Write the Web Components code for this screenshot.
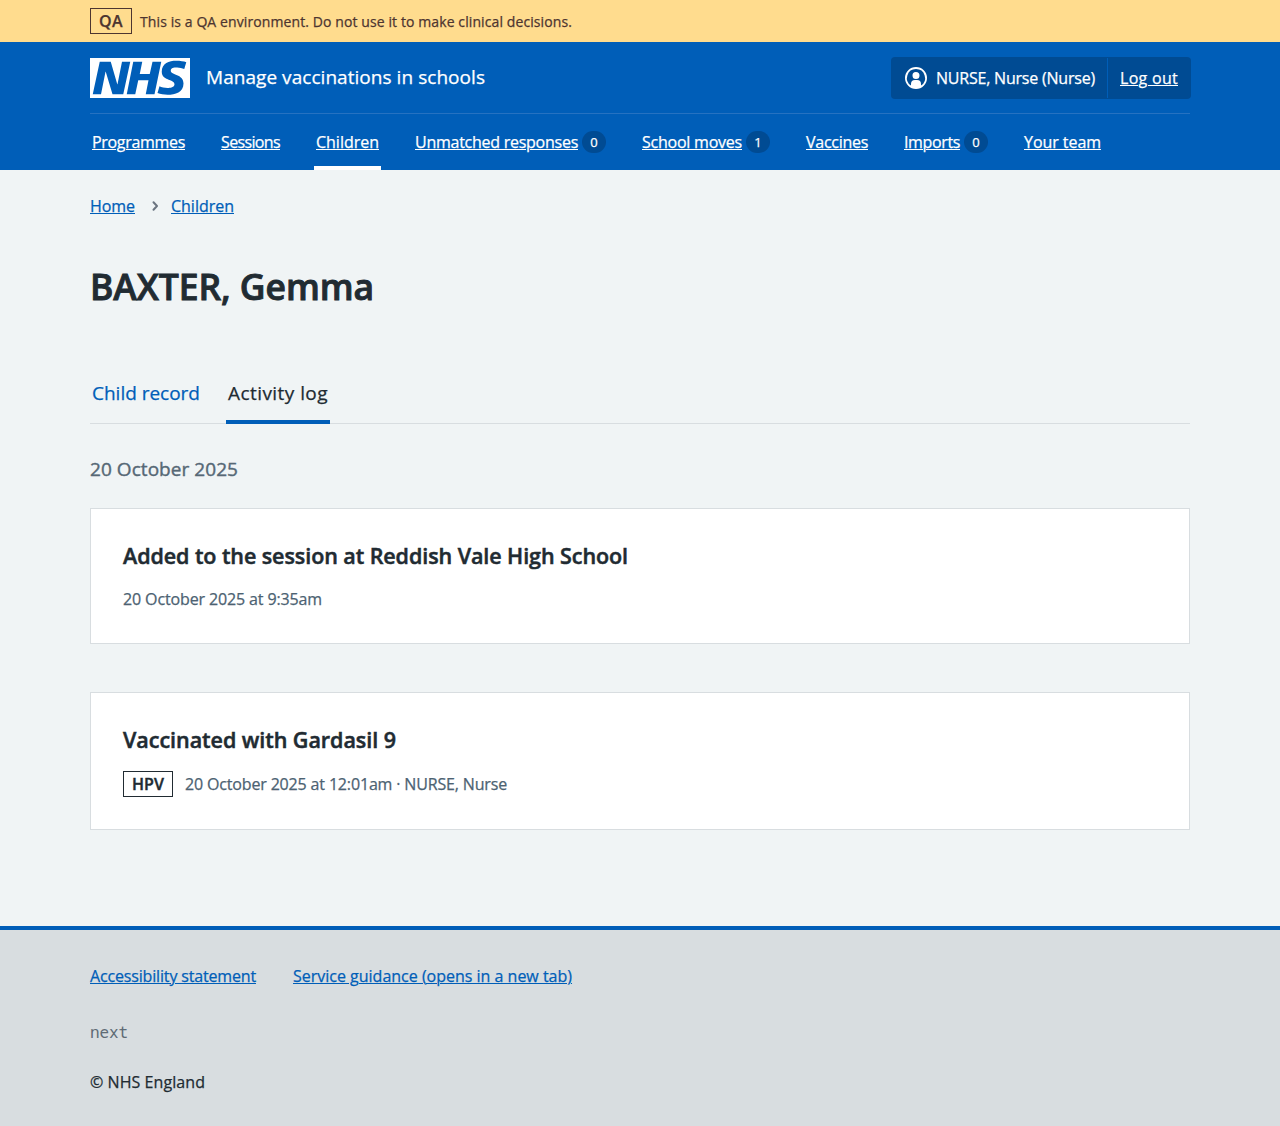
<!DOCTYPE html>
<html lang="en">
<head>
<meta charset="utf-8">
<title>BAXTER, Gemma – Manage vaccinations in schools</title>
<style>
body{margin:0;background:#f0f4f5;color:#212b32;font:400 16px/24px "Open Sans","Noto Sans",sans-serif;-webkit-text-stroke:.25px}
</style>
</head>
<body>
<app-page></app-page>
<script>
const define=(name,html,setup)=>{
  const t=document.createElement('template');
  t.innerHTML=html;
  customElements.define(name,class extends HTMLElement{
    connectedCallback(){
      if(this.shadowRoot)return;
      this.attachShadow({mode:'open'}).append(t.content.cloneNode(true));
      if(setup)setup.call(this,this.shadowRoot);
    }
  });
};

/* Text run tracked to occupy an exact measure */
define('text-run',`<style>:host{display:inline-block;white-space:nowrap;flex:none}span{display:inline-block;text-decoration:var(--line,none);text-decoration-thickness:1px;text-underline-offset:1px;text-decoration-skip-ink:auto}</style><span><slot></slot></span>`,function(root){
  const s=root.querySelector('span'),w=+this.getAttribute('measure');
  const n=this.textContent.length;
  s.style.letterSpacing=(w-s.getBoundingClientRect().width)/n+'px';
  this.style.width=w+'px';
});

define('text-link',`<style>:host{display:inline-block;color:#005eb8;flex:none;--line:underline}a{display:block;color:inherit;cursor:pointer}</style><a><slot></slot></a>`);

define('environment-banner',`<style>
:host{display:block;background:#ffdc8e;color:#4d3530;height:42px}
div{width:1100px;height:42px;margin:0 auto;display:flex;align-items:center;gap:8px;font-size:14px}
b{box-sizing:border-box;border:1px solid;height:26px;width:42px;padding-left:8px;line-height:24px;font-size:16px;font-weight:600}
p{margin:1px 0 0}
</style><div><b><text-run measure="24">QA</text-run></b><p><text-run measure="432">This is a QA environment. Do not use it to make clinical decisions.</text-run></p></div>`);

define('nhs-logo',`<style>:host{display:block}svg{display:block}</style>
<svg width="100" height="40" viewBox="0 0 200 80" role="img" aria-label="NHS"><path fill="#fff" d="M200 0v80H0V0h200Zm-27.5 5.5c-14.5 0-29 5-29 22 0 10.2 7.7 13.5 14.7 16.3l.7.3c5.4 2 10.1 3.9 10.1 8.4 0 6.5-8.5 7.5-14 7.5s-12.5-1.5-16-3.5L135 70c5.5 2 13.5 3.5 20 3.5 15.5 0 32-4.5 32-22.5 0-19.5-25.5-16.5-25.5-25.5 0-5.5 5.5-6.5 12.5-6.5a35 35 0 0 1 14.5 3l4-13.5c-4.5-2-12-3-20-3Zm-131 2h-22l-14 65H22l9-45h.5l13.5 45h21.5l14-65H64l-9 45h-.5l-13-45Zm63 0h-18l-13 65h17l6-28H117l-5.5 28H129l13.5-65H125L119.5 32h-20l5-24.5Z"/></svg>`);

define('account-menu',`<style>
:host{display:flex;box-sizing:border-box;width:300px;height:42px;background:#004b93;border-radius:4px;padding:1px 0;margin-right:-1px;color:#fff}
div{display:flex;align-items:center;box-sizing:border-box}
.u{width:217px;padding-left:13px;gap:8px;border-right:1px solid #005eb8}
.o{padding-left:12px}
text-link{color:#fff}
</style><div class="u"><svg width="24" height="24" viewBox="0 0 24 24" fill="#fff"><path d="M12 1a11 11 0 1 1 0 22 11 11 0 0 1 0-22Zm0 2a9 9 0 0 0-5 16.5V18a4 4 0 0 1 4-4h2a4 4 0 0 1 4 4v1.5A9 9 0 0 0 12 3Zm0 3a3.5 3.5 0 1 1-3.5 3.5A3.4 3.4 0 0 1 12 6Z"/></svg><text-run measure="159">NURSE, Nurse (Nurse)</text-run></div><div class="o"><text-link><text-run measure="58">Log out</text-run></text-link></div>`);

define('count-badge',`<style>:host{display:block;width:24px;height:22px;border-radius:11px;background:#004b93;font-size:13px;line-height:23px;text-align:center;flex:none}</style><slot></slot>`);

define('nav-item',`<style>
:host{display:flex;align-items:center;gap:4px;box-sizing:border-box;height:56px;padding:4px 2px 0;border-bottom:4px solid transparent;flex:none}
:host([current]){border-color:#fff}text-link{color:#fff}
</style><text-link><slot></slot></text-link><slot name="count"></slot>`);

define('site-header',`<style>
:host{display:block;background:#005eb8;color:#fff;height:128px}
.in{width:1100px;margin:0 auto}
.top{height:71px;display:flex;align-items:center;justify-content:space-between;border-bottom:1px solid #2672c1}
.brand{display:flex;align-items:center;gap:16px;font-size:19px;line-height:28px}
.brand text-run{margin-bottom:2px}
nav{display:flex;gap:32px}
</style><div class="in"><div class="top"><div class="brand"><nhs-logo></nhs-logo><text-run measure="279">Manage vaccinations in schools</text-run></div><account-menu></account-menu></div>
<nav>
<nav-item><text-run measure="93">Programmes</text-run></nav-item>
<nav-item><text-run measure="59">Sessions</text-run></nav-item>
<nav-item current><text-run measure="63">Children</text-run></nav-item>
<nav-item><text-run measure="163">Unmatched responses</text-run><count-badge slot="count">0</count-badge></nav-item>
<nav-item><text-run measure="100">School moves</text-run><count-badge slot="count">1</count-badge></nav-item>
<nav-item><text-run measure="62">Vaccines</text-run></nav-item>
<nav-item><text-run measure="56">Imports</text-run><count-badge slot="count">0</count-badge></nav-item>
<nav-item><text-run measure="77">Your team</text-run></nav-item>
</nav></div>`);

define('bread-crumbs',`<style>:host{display:flex;align-items:center;padding-top:24px;height:24px}svg{margin:0 11px 0 17px}</style>
<text-link><text-run measure="45">Home</text-run></text-link><svg width="8" height="12" viewBox="0 0 8 12" fill="none" stroke="#6b7480" stroke-width="2" stroke-linecap="round" stroke-linejoin="round"><path d="M1.5 2.3 5 6 1.5 9.7"/></svg><text-link><text-run measure="63">Children</text-run></text-link>`);

define('tab-item',`<style>:host{display:block;box-sizing:border-box;height:60px;padding:15px 2px 0;border-bottom:4px solid transparent;color:#005eb8;font-size:19px;line-height:28px}:host([current]){color:#212b32;border-color:#005eb8}</style><slot></slot>`);

define('tab-bar',`<style>:host{display:flex;gap:24px;height:59px;border-bottom:1px solid #d8dde0}</style><slot></slot>`);

define('event-card',`<style>
:host{display:block;box-sizing:border-box;background:#fff;border:1px solid #d8dde0;padding:32px}
h3{margin:0 0 16px;font-size:21.5px;line-height:30px;font-weight:600;-webkit-text-stroke:.5px}
.m{display:flex;align-items:center;gap:12px;color:#4c6272}
</style><h3><slot name="title"></slot></h3><div class="m"><slot></slot></div>`);

define('programme-tag',`<style>:host{display:block;box-sizing:border-box;width:50px;height:26px;border:1px solid #212b32;color:#212b32;padding-left:8px;font-weight:600;-webkit-text-stroke:.4px;line-height:24px}</style><slot></slot>`);

define('site-footer',`<style>
:host{display:block;box-sizing:border-box;background:#d8dde0;border-top:4px solid #005eb8;height:200px;padding-top:34px}
div{width:1100px;margin:0 auto}
.l{display:flex;gap:37px}
.v{padding-top:32px;font-family:"Noto Sans Mono","Liberation Mono",monospace;font-weight:400;color:#5f6b75;-webkit-text-stroke:0}
.c{padding-top:26px}
</style><div class="l"><text-link><text-run measure="166">Accessibility statement</text-run></text-link><text-link><text-run measure="279">Service guidance (opens in a new tab)</text-run></text-link></div>
<div class="v"><text-run measure="38">next</text-run></div><div class="c"><text-run measure="115">© NHS England</text-run></div>`);

define('app-page',`<style>
:host{display:flex;flex-direction:column;min-height:1126px}
main{width:1100px;margin:0 auto;height:756px}
h1{margin:43px 0 0;height:50px;font-size:35.5px;line-height:50px;font-weight:600;-webkit-text-stroke:.9px}
tab-bar{margin-top:53px}
h2{margin:31px 0 0;font-size:19px;line-height:28px;font-weight:400;color:#566875;-webkit-text-stroke:.4px}
.a{margin-top:25px;height:136px}.b{margin-top:48px;height:138px}
</style>
<environment-banner></environment-banner><site-header></site-header>
<main><bread-crumbs></bread-crumbs>
<h1><text-run measure="284">BAXTER, Gemma</text-run></h1>
<tab-bar><tab-item><text-run measure="108">Child record</text-run></tab-item><tab-item current><text-run measure="100">Activity log</text-run></tab-item></tab-bar>
<h2><text-run measure="148">20 October 2025</text-run></h2>
<event-card class="a"><text-run slot="title" measure="505">Added to the session at Reddish Vale High School</text-run><text-run measure="199">20 October 2025 at 9:35am</text-run></event-card>
<event-card class="b"><text-run slot="title" measure="273">Vaccinated with Gardasil 9</text-run><programme-tag><text-run measure="32">HPV</text-run></programme-tag><text-run measure="322">20 October 2025 at 12:01am · NURSE, Nurse</text-run></event-card>
</main><site-footer></site-footer>`);
</script>
</body>
</html>
